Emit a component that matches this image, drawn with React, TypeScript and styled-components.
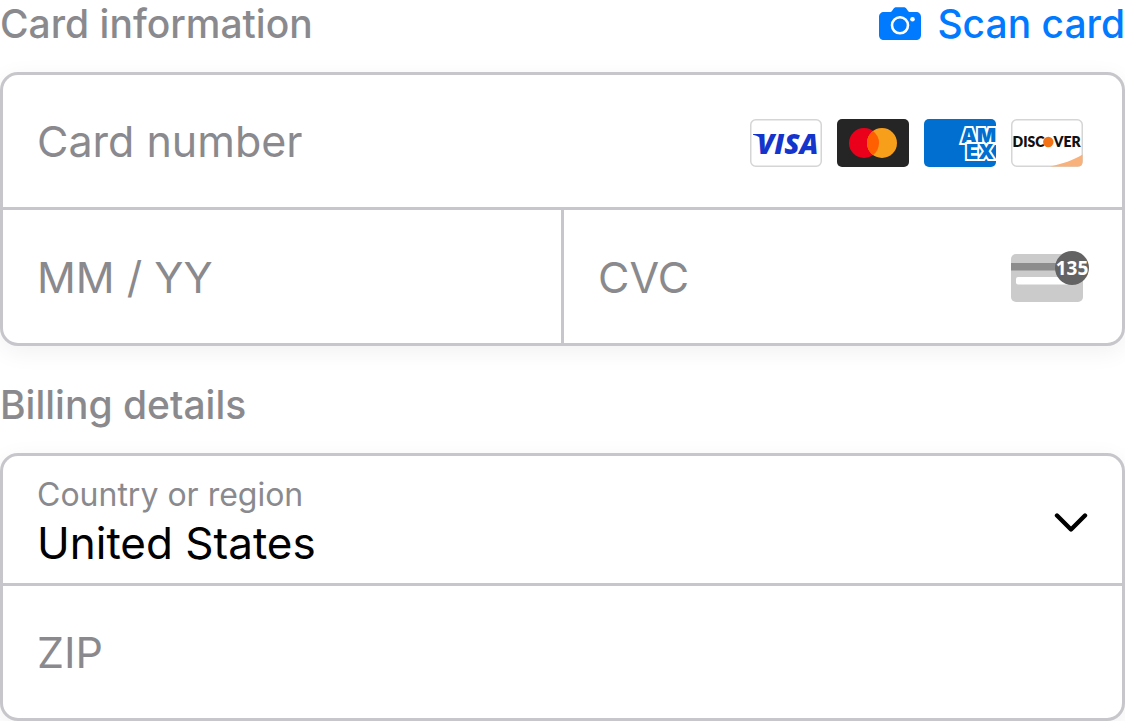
import React from "react";
import styled, { createGlobalStyle } from "styled-components";

const line = "#c7c6cb";
const muted = "#8a8a8e";
const accent = "#007aff";

const GlobalStyle = createGlobalStyle`
  *, *::before, *::after { box-sizing: border-box; }
  body {
    margin: 0;
    background: #fff;
    font-family: Inter, "Liberation Sans", sans-serif;
    color: #000;
  }
`;

const Form = styled.form`
  display: flex;
  flex-direction: column;
  gap: 35px;
`;

const Section = styled.section`
  display: flex;
  flex-direction: column;
  gap: 24px;
`;

const SectionHeader = styled.header`
  display: flex;
  align-items: center;
  justify-content: space-between;
  height: 48px;
`;

const Heading = styled.h2`
  margin: 0;
  font-size: 39px;
  line-height: 48px;
  font-weight: 500;
  color: ${muted};
`;

const ScanButton = styled.button`
  display: flex;
  align-items: center;
  gap: 16px;
  padding: 0;
  border: 0;
  background: none;
  font: inherit;
  font-size: 39px;
  line-height: 48px;
  font-weight: 500;
  color: ${accent};
  cursor: pointer;
`;

const FieldGroup = styled.div`
  display: grid;
  gap: 3px;
  border: 3px solid ${line};
  border-radius: 18px;
  background: ${line};
  overflow: hidden;
  box-shadow: 0 6px 24px rgba(0, 0, 0, 0.06);
`;

const FieldPair = styled.div`
  display: grid;
  grid-template-columns: 1fr 1fr;
  gap: 3px;
`;

const Field = styled.div<{ $end?: number; $top?: number; $height?: number }>`
  display: flex;
  align-items: center;
  min-width: 0;
  min-height: ${(p) => p.$height ?? 132}px;
  padding: ${(p) => p.$top ?? 0}px ${(p) => p.$end ?? 33}px 0 34px;
  background: #fff;
`;

const TextInput = styled.input`
  flex: 1;
  min-width: 0;
  width: 100%;
  height: 60px;
  padding: 0;
  border: 0;
  outline: 0;
  background: none;
  font: inherit;
  font-size: 43px;
  color: #000;
  &::placeholder { color: ${muted}; opacity: 1; }
`;

const SelectStack = styled.div`
  display: flex;
  flex: 1;
  flex-direction: column;
  min-width: 0;
`;

const SelectLabel = styled.label`
  font-size: 32px;
  line-height: 40px;
  color: ${muted};
`;

const Select = styled.select`
  appearance: none;
  height: 56px;
  padding: 0;
  border: 0;
  outline: 0;
  background: none;
  font: inherit;
  font-size: 44px;
  color: #000;
`;

const Brands = styled.div`
  display: flex;
  gap: 15px;
  padding-top: 4px;
`;

const CameraIcon = () => (
  <svg width="42" height="34" viewBox="0 0 42 34" aria-hidden="true">
    <path
      fill={accent}
      d="M5 5h5.500c1.500 0 2-.5 2.800-1.500l1.200-1.700C15.500.5 16.300.300 17.500.300h7c1.200 0 2 .2 3 1.500l1.200 1.700C29.500 4.500 30 5 31.500 5H37c3 0 5 2 5 5v18c0 3-2 5-5 5H5c-3 0-5-2-5-5V10c0-3 2-5 5-5Z"
    />
    <circle cx="21" cy="18.300" r="8" fill={accent} stroke="#fff" strokeWidth="2.600" />
    <circle cx="33.500" cy="12.300" r="2.300" fill="#fff" />
  </svg>
);

const VisaIcon = () => (
  <svg width="72" height="48" viewBox="0 0 72 48" role="img" aria-label="Visa">
    <rect x="0.750" y="0.750" width="70.500" height="46.500" rx="5" fill="#fff" stroke="#d5d5d5" strokeWidth="1.500" />
    <text x="7" y="34.500" fontFamily="Open Sans" fontSize="28" fontWeight="800" fontStyle="italic" fill="#1434cb">VISA</text>
    <path d="M3 15h9l1.500 8C11.500 19 8 16.800 3 15.800Z" fill="#1434cb" />
  </svg>
);

const MastercardIcon = () => (
  <svg width="72" height="48" viewBox="0 0 72 48" role="img" aria-label="Mastercard">
    <rect width="72" height="48" rx="5" fill="#252525" />
    <circle cx="27" cy="24" r="15" fill="#eb001b" />
    <circle cx="45" cy="24" r="15" fill="#f79e1b" />
    <path d="M36 12a15 15 0 0 1 0 24a15 15 0 0 1 0-24Z" fill="#ff5f00" />
  </svg>
);

const AmexIcon = () => (
  <svg width="72" height="48" viewBox="0 0 72 48" role="img" aria-label="American Express">
    <defs>
      <clipPath id="amex-card"><rect width="72" height="48" rx="5" /></clipPath>
    </defs>
    <g clipPath="url(#amex-card)">
      <rect width="72" height="48" fill="#006fcf" />
      <g fontFamily="Inter" fontSize="20" fontWeight="900" fill="#006fcf" stroke="#fff" strokeWidth="4" paintOrder="stroke">
        <text x="37" y="23.500">AM</text>
        <text x="42" y="39.500">EX</text>
      </g>
    </g>
  </svg>
);

const DiscoverIcon = () => (
  <svg width="72" height="48" viewBox="0 0 72 48" role="img" aria-label="Discover">
    <rect x="0.750" y="0.750" width="70.500" height="46.500" rx="5" fill="#fff" stroke="#d5d5d5" strokeWidth="1.500" />
    <path d="M39 47.500C51 45 63 41 71.500 35.500V43c0 3-1.500 4.500-4.500 4.500Z" fill="#f9b17c" />
    <g fontFamily="Lato" fontSize="14" fontWeight="800" fill="#111">
      <text x="1.500" y="28">DISC</text>
      <text x="42.500" y="28">VER</text>
    </g>
    <circle cx="37.300" cy="23" r="5.200" fill="#f47216" />
  </svg>
);

const CvcIcon = () => (
  <svg width="78" height="51" viewBox="0 0 78 51" role="img" aria-label="Security code">
    <rect y="3" width="72" height="48" rx="5" fill="#cbcbcb" />
    <rect y="12" width="72" height="7.500" fill="#8d8d8d" />
    <rect x="5" y="26" width="60" height="7.500" rx="2" fill="#fff" />
    <circle cx="61" cy="17" r="17" fill="#636363" />
    <text x="61" y="24" textAnchor="middle" fontFamily="Noto Sans" fontSize="19" fontWeight="700" fill="#fff">135</text>
  </svg>
);

const ChevronIcon = () => (
  <svg width="35" height="20" viewBox="0 0 35 20" aria-hidden="true">
    <path d="M3 2.500 17 16.500 31 2.500" fill="none" stroke="#000" strokeWidth="4.400" strokeLinecap="round" strokeLinejoin="round" />
  </svg>
);

export default function App() {
  return (
    <>
      <GlobalStyle />
      <Form>
        <Section>
          <SectionHeader>
            <Heading>Card information</Heading>
            <ScanButton type="button">
              <CameraIcon />
              Scan card
            </ScanButton>
          </SectionHeader>
          <FieldGroup>
            <Field $end={39}>
              <TextInput aria-label="Card number" placeholder="Card number" inputMode="numeric" />
              <Brands>
                <VisaIcon />
                <MastercardIcon />
                <AmexIcon />
                <DiscoverIcon />
              </Brands>
            </Field>
            <FieldPair>
              <Field $height={133}>
                <TextInput aria-label="Expiration date" placeholder="MM / YY" inputMode="numeric" />
              </Field>
              <Field $height={133}>
                <TextInput aria-label="CVC" placeholder="CVC" inputMode="numeric" />
                <CvcIcon />
              </Field>
            </FieldPair>
          </FieldGroup>
        </Section>
        <Section>
          <SectionHeader>
            <Heading>Billing details</Heading>
          </SectionHeader>
          <FieldGroup>
            <Field $height={127} $top={7}>
              <SelectStack>
                <SelectLabel htmlFor="country">Country or region</SelectLabel>
                <Select id="country" defaultValue="US">
                  <option value="US">United States</option>
                </Select>
              </SelectStack>
              <ChevronIcon />
            </Field>
            <Field>
              <TextInput aria-label="ZIP" placeholder="ZIP" inputMode="numeric" />
            </Field>
          </FieldGroup>
        </Section>
      </Form>
    </>
  );
}
